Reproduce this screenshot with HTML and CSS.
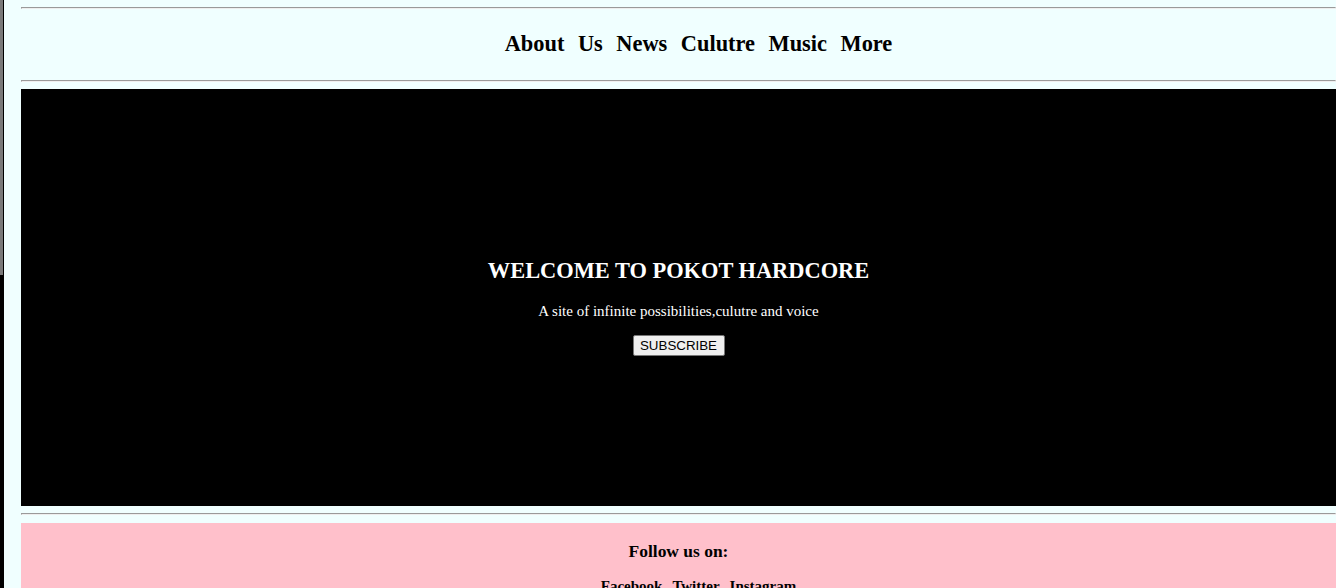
FILE: index.html
```html
<!DOCTYPE html>
<html lang="en">
<head>
<meta charset="utf-8">
<title>Pokot Hardcore</title>
<link rel="stylesheet" href="styles.css">
</head>
<body>
<div class="strip"></div>
<div class="page">
  <hr class="rule rule-top">
  <nav class="nav">
    <ul class="nav-list">
      <li>About</li>
      <li>Us</li>
      <li>News</li>
      <li>Culutre</li>
      <li>Music</li>
      <li>More</li>
    </ul>
  </nav>
  <hr class="rule rule-mid">
  <section class="hero">
    <h2 class="hero-title">WELCOME TO POKOT HARDCORE</h2>
    <p class="hero-sub">A site of infinite possibilities,culutre and voice</p>
    <button class="hero-btn" type="button">SUBSCRIBE</button>
  </section>
  <hr class="rule rule-bottom">
  <footer class="footer">
    <h3 class="footer-title">Follow us on:</h3>
    <ul class="social-list">
      <li>Facebook</li>
      <li>Twitter</li>
      <li>Instagram</li>
    </ul>
  </footer>
</div>
</body>
</html>
```

FILE: styles.css
```css
html, body {
  margin: 0;
  padding: 0;
  height: 100%;
  overflow: hidden;
}

body {
  background: #ffffff;
  display: flex;
  font-family: "Liberation Serif", "Times New Roman", serif;
}

.strip {
  width: 4px;
  flex: none;
  background: linear-gradient(to bottom, #7a7a7a 0, #7a7a7a 275px, #000 275px, #000 100%);
  box-shadow: inset -1px 0 0 #000;
}

.page {
  width: 1332px;
  flex: none;
  background: #f0ffff;
  padding: 7px 0 0 17px;
  box-sizing: border-box;
  height: 100%;
}

.rule {
  border: 1px inset;
  color: gray;
  margin: 0;
  height: 0;
}

.nav {
  padding: 22px 0 23px;
}

.nav-list,
.social-list {
  list-style: none;
  margin: 0;
  padding: 0 0 0 40px;
  display: flex;
  justify-content: center;
  font-weight: bold;
  color: #000;
}

.nav-list {
  gap: 13.5px;
  font-size: 22.4px;
  line-height: 26px;
}

.rule-mid {
  margin-bottom: 7px;
}

.hero {
  background: #000;
  height: 417px;
  box-sizing: border-box;
  padding-top: 169px;
  display: flex;
  flex-direction: column;
  align-items: center;
  color: #fff;
}

.hero-title {
  margin: 0;
  font-size: 22.4px;
  line-height: 26px;
  font-weight: bold;
}

.hero-sub {
  margin: 19px 0 0;
  font-size: 15px;
  line-height: 17px;
}

.hero-btn {
  margin-top: 15px;
  width: 92px;
  height: 21px;
  box-sizing: border-box;
  padding: 0 6px;
  font-family: "Liberation Sans", Arial, sans-serif;
  font-size: 13.33px;
  color: #000;
  background: #efefef;
  border: 1px solid #767676;
  border-radius: 2px;
}

.rule-bottom {
  margin-top: 7px;
  margin-bottom: 8px;
}

.footer {
  background: #ffc0cb;
  padding-top: 18px;
  height: 200px;
}

.footer-title {
  margin: 0;
  text-align: center;
  font-size: 17.47px;
  line-height: 20px;
  font-weight: bold;
}

.social-list {
  margin-top: 17px;
  gap: 10px;
  font-size: 15px;
  line-height: 17px;
}
```
